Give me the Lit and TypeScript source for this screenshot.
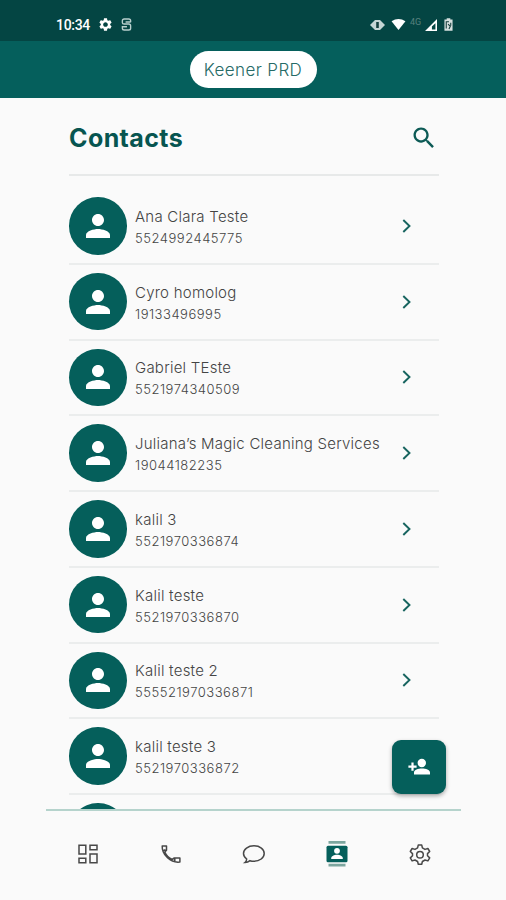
import { LitElement, html, css, svg } from "lit";
import { customElement } from "lit/decorators.js";

interface Contact {
  name: string;
  phone: string;
}

const contacts: Contact[] = [
  { name: "Ana Clara Teste", phone: "5524992445775" },
  { name: "Cyro homolog", phone: "19133496995" },
  { name: "Gabriel TEste", phone: "5521974340509" },
  { name: "Juliana’s Magic Cleaning Services", phone: "19044182235" },
  { name: "kalil 3", phone: "5521970336874" },
  { name: "Kalil teste", phone: "5521970336870" },
  { name: "Kalil teste 2", phone: "555521970336871" },
  { name: "kalil teste 3", phone: "5521970336872" },
  { name: "", phone: "" },
];

const person = svg`<path d="M12 12c2.21 0 4-1.79 4-4s-1.79-4-4-4-4 1.79-4 4 1.79 4 4 4zm0 2c-2.67 0-8 1.34-8 4v2h16v-2c0-2.66-5.33-4-8-4z"/>`;
const gearPath =
  "M19.14 12.94c.04-.3.06-.61.06-.94 0-.32-.02-.64-.07-.94l2.03-1.58c.18-.14.23-.41.12-.61l-1.92-3.32c-.12-.22-.37-.29-.59-.22l-2.39.96c-.5-.38-1.03-.7-1.62-.94l-.36-2.54c-.04-.24-.24-.41-.48-.41h-3.84c-.24 0-.43.17-.47.41l-.36 2.54c-.59.24-1.13.57-1.62.94l-2.39-.96c-.22-.08-.47 0-.59.22L2.74 8.87c-.12.21-.08.47.12.61l2.03 1.58c-.05.3-.09.63-.09.94s.02.64.07.94l-2.03 1.58c-.18.14-.23.41-.12.61l1.92 3.32c.12.22.37.29.59.22l2.39-.96c.5.38 1.03.7 1.62.94l.36 2.54c.05.24.24.41.48.41h3.84c.24 0 .44-.17.47-.41l.36-2.54c.59-.24 1.13-.56 1.62-.94l2.39.96c.22.08.47 0 .59-.22l1.92-3.32c.12-.22.07-.47-.12-.61l-2.01-1.58zM12 15.6c-1.98 0-3.6-1.62-3.6-3.6s1.62-3.6 3.6-3.6 3.6 1.62 3.6 3.6-1.62 3.6-3.6 3.6z";

@customElement("contact-row")
class ContactRow extends LitElement {
  static properties = { contact: { attribute: false } };
  declare contact: Contact;
  static styles = css`
    :host {
      display: flex;
      box-sizing: border-box;
      flex: none;
      height: 75.75px;
      align-items: center;
      border-bottom: 2px solid #ebeded;
      font-family: Inter, "Liberation Sans", sans-serif;
      color: #444;
    }
    .avatar {
      width: 57.5px;
      height: 57.5px;
      border-radius: 50%;
      background: #055f5b;
      display: grid;
      place-items: center;
      flex: none;
    }
    .avatar svg { width: 36px; height: 36px; fill: #fff; }
    .text { flex: 1; margin-left: 8.5px; white-space: nowrap; padding-top: 3px; }
    .name { font-size: 15px; line-height: 22px; letter-spacing: 0.24px; font-weight: 300; }
    .phone { font-size: 13px; line-height: 21px; letter-spacing: 0.52px; font-weight: 300; }
    .chevron { width: 12px; height: 16px; margin-right: 25.5px; fill: none; stroke: #17645f; stroke-width: 1.9; }
  `;
  render() {
    return html`
      <div class="avatar"><svg viewBox="0 0 24 24">${person}</svg></div>
      <div class="text">
        <div class="name">${this.contact.name}</div>
        <div class="phone">${this.contact.phone}</div>
      </div>
      <svg class="chevron" viewBox="0 0 12 16"><path d="M2.3 2 8.5 8 2.3 14" /></svg>
    `;
  }
}

@customElement("app-root")
class AppRoot extends LitElement {
  static styles = css`
    :host {
      display: flex;
      flex-direction: column;
      position: relative;
      height: 900px;
      width: 506px;
      overflow: hidden;
      background: #fafafa;
      font-family: Inter, "Liberation Sans", sans-serif;
    }
    .status {
      height: 41px;
      flex: none;
      box-sizing: border-box;
      background: #044543;
      color: #fff;
      display: flex;
      align-items: center;
      padding: 8px 52px 0 56px;
      font: 500 14px/16px Roboto, sans-serif;
    }
    .status svg { display: block; fill: #fff; }
    .time { width: 34px; letter-spacing: -0.3px; }
    .cog { width: 13px; height: 13px; margin-left: 9px; }
    .s { width: 11px; height: 13px; margin-left: 9px; }
    .space { flex: 1; }
    .vib { width: 15px; height: 12px; }
    .wifi { width: 15px; height: 13px; margin-left: 6px; }
    .net { font-size: 9px; color: #58817e; width: 12px; margin: -5px 0 0 4px; font-weight: 400; }
    .signal { width: 12px; height: 12px; margin-left: 3px; }
    .battery { width: 9px; height: 13px; margin-left: 7px; margin-right: 1px; }
    .bar {
      height: 57px;
      flex: none;
      background: #055f5c;
      display: grid;
      place-items: center;
    }
    .pill {
      width: 127px;
      height: 37px;
      border-radius: 19px;
      background: #fff;
      color: #266a66;
      font-size: 17px;
      letter-spacing: 0.4px;
      font-weight: 300;
      line-height: 38px;
      text-align: center;
      white-space: nowrap;
    }
    .list {
      height: 711px;
      box-sizing: border-box;
      flex: none;
      margin: 0 45px 0 46px;
      padding: 0 22.5px 0 23px;
      overflow: hidden;
      display: flex;
      flex-direction: column;
    }
    .head {
      height: 78px;
      flex: none;
      box-sizing: border-box;
      border-bottom: 2px solid #e7e9e9;
      margin-bottom: 13px;
      display: flex;
      align-items: center;
      justify-content: space-between;
    }
    h1 { margin: 3px 0 0; font-size: 25px; line-height: 30px; letter-spacing: 0.4px; font-weight: 700; color: #075550; }
    .head svg { width: 28px; height: 28px; margin: 3px 1px 0 0; fill: #0c5a55; }
    .nav {
      flex: 1;
      margin: 0 45px 0 46px;
      padding-bottom: 4px;
      border-top: 2px solid #b5d3cc;
      display: grid;
      grid-template-columns: repeat(5, 83px);
      align-items: center;
      justify-items: center;
    }
    .nav svg { width: 24px; height: 28px; fill: none; stroke: #484848; stroke-width: 1.5; }
    .nav .book { fill: #055f5b; stroke: none; }
    .fab {
      position: absolute;
      left: 392px;
      top: 740px;
      width: 54px;
      height: 54px;
      border-radius: 9px;
      background: #055f5b;
      box-shadow: 0 2px 4px #0005;
      display: grid;
      place-items: center;
    }
    .fab svg { width: 24px; height: 24px; fill: #fff; }
  `;

  render() {
    return html`
      <div class="status">
        <span class="time">10:34</span>
        <svg class="cog" viewBox="2 2 20 20"><path d=${gearPath} /></svg>
        <svg class="s" viewBox="0 0 12 14">
          <path d="M10.500 4.500V3q0-2-2-2h-5q-2 0-2 2v2q0 1.500 2 1.500h5q2 0 2 2V11q0 2-2 2h-5q-2 0-2-2V9.500h5M10.500 4.300H5" style="fill:none;stroke:#b9d0ce;stroke-width:1.500" />
        </svg>
        <span class="space"></span>
        <svg class="vib" viewBox="0 0 15 12">
          <path fill="#c5d5d4" d="M0 6 3.500 2.500 5 1h5l1.500 1.500L15 6l-3.500 3.500L10 11H5L3.500 9.500z" />
          <path fill="#143f3d" d="M6.200 3h2.600v6H6.200z" />
        </svg>
        <svg class="wifi" viewBox="0 0 16 14"><path d="M.5 3.500Q8-1.500 15.500 3.500L8 13z" /></svg>
        <span class="net">4G</span>
        <svg class="signal" viewBox="0 0 13 13"><path fill-rule="evenodd" d="M13 0v13H0zM11.300 4.500 7.500 8v3.300h3.800z" /></svg>
        <svg class="battery" viewBox="0 0 10 14">
          <path d="M3 0h4v1.500h2.500V14h-9V1.500H3z" fill="#d5e0df" />
          <path d="M2.500 11.500V4h3M7.500 5v3.500M4.500 6.500 7 9 5.500 12" fill="none" stroke="#163f3d" stroke-width="1.200" />
        </svg>
      </div>
      <div class="bar"><div class="pill">Keener PRD</div></div>
      <div class="list">
        <div class="head">
          <h1>Contacts</h1>
          <svg viewBox="0 0 24 24">
            <path d="M15.500 14h-.79l-.28-.27C15.410 12.590 16 11.110 16 9.500 16 5.910 13.090 3 9.500 3S3 5.910 3 9.500 5.910 16 9.500 16c1.610 0 3.090-.59 4.230-1.570l.27.28v.79l5 4.990L20.490 19l-4.990-5zm-6 0C7.010 14 5 11.990 5 9.500S7.010 5 9.500 5 14 7.010 14 9.500 11.990 14 9.500 14z" />
          </svg>
        </div>
        ${contacts.map((c) => html`<contact-row .contact=${c}></contact-row>`)}
      </div>
      <div class="nav">
        <svg viewBox="0 0 24 28">
          <path d="M3 5.200h6.800v8.900H3zM14 5.200h7v4.600h-7zM3 18.200h6.800v4.600H3zM14 13.900h7v8.900h-7z" />
        </svg>
        <svg viewBox="0 0 24 28">
          <path d="M3.200 5.900h4.300v4.300L5.800 12c1.400 3.300 4 6 7.500 7.400l2-1.500h5.600v4.100c-9 1.200-18.200-7-17.700-16.100zM4.500 10.500l2-.8M15.800 21.200v-2.500" stroke-linejoin="round" />
        </svg>
        <svg viewBox="0 0 24 28">
          <path d="M3 22.500c1.200-1 1.600-2.200 1.700-3.500C2.800 17.500 1.500 15.700 1.500 13.500 1.500 9.200 6 5.800 12 5.800s10.200 3.400 10.200 7.700-4.500 7.800-10.200 7.800c-1.400 0-2.800-.2-4-.6-1.300 1-3.200 1.700-5 1.800z" />
        </svg>
        <svg class="book" viewBox="0 0 24 28">
          <path fill="#7da69f" d="M3.500 1h17v2.700h-17zM3.500 23.800h17v2.700h-17z" />
          <rect x="1.500" y="5.700" width="21" height="16.600" rx="1.500" />
          <circle cx="12" cy="10.800" r="2.900" fill="#fff" />
          <path fill="#fff" d="M6.200 19v-.8c0-2.300 3-3.500 5.800-3.500s5.800 1.200 5.800 3.500v.8z" />
        </svg>
        <svg viewBox="0 0 24 28">
          <path d="M10.300 4.900h3.400l.7 3 2.600 1.500 2.900-.9 1.800 3-2.200 2.100v2.200l2.200 2.100-1.800 3-2.900-.9-2.600 1.500-.7 2.800h-3.400l-.7-2.800L7 20l-2.900.9-1.800-3 2.200-2.100v-2.200l-2.200-2.100 1.800-3 2.900.9 2.600-1.500z" stroke-linejoin="round" />
          <circle cx="12" cy="14.700" r="3.300" />
        </svg>
      </div>
      <div class="fab">
        <svg viewBox="0 0 24 24">
          <circle cx="14.800" cy="8" r="4.200" />
          <path d="M7 19.500v-2c0-2.600 4.200-4 8-4s8 1.400 8 4v2zM4.400 7.500h2.200v3h3v2.200h-3v3H4.400v-3h-3v-2.200h3z" />
        </svg>
      </div>
    `;
  }
}
